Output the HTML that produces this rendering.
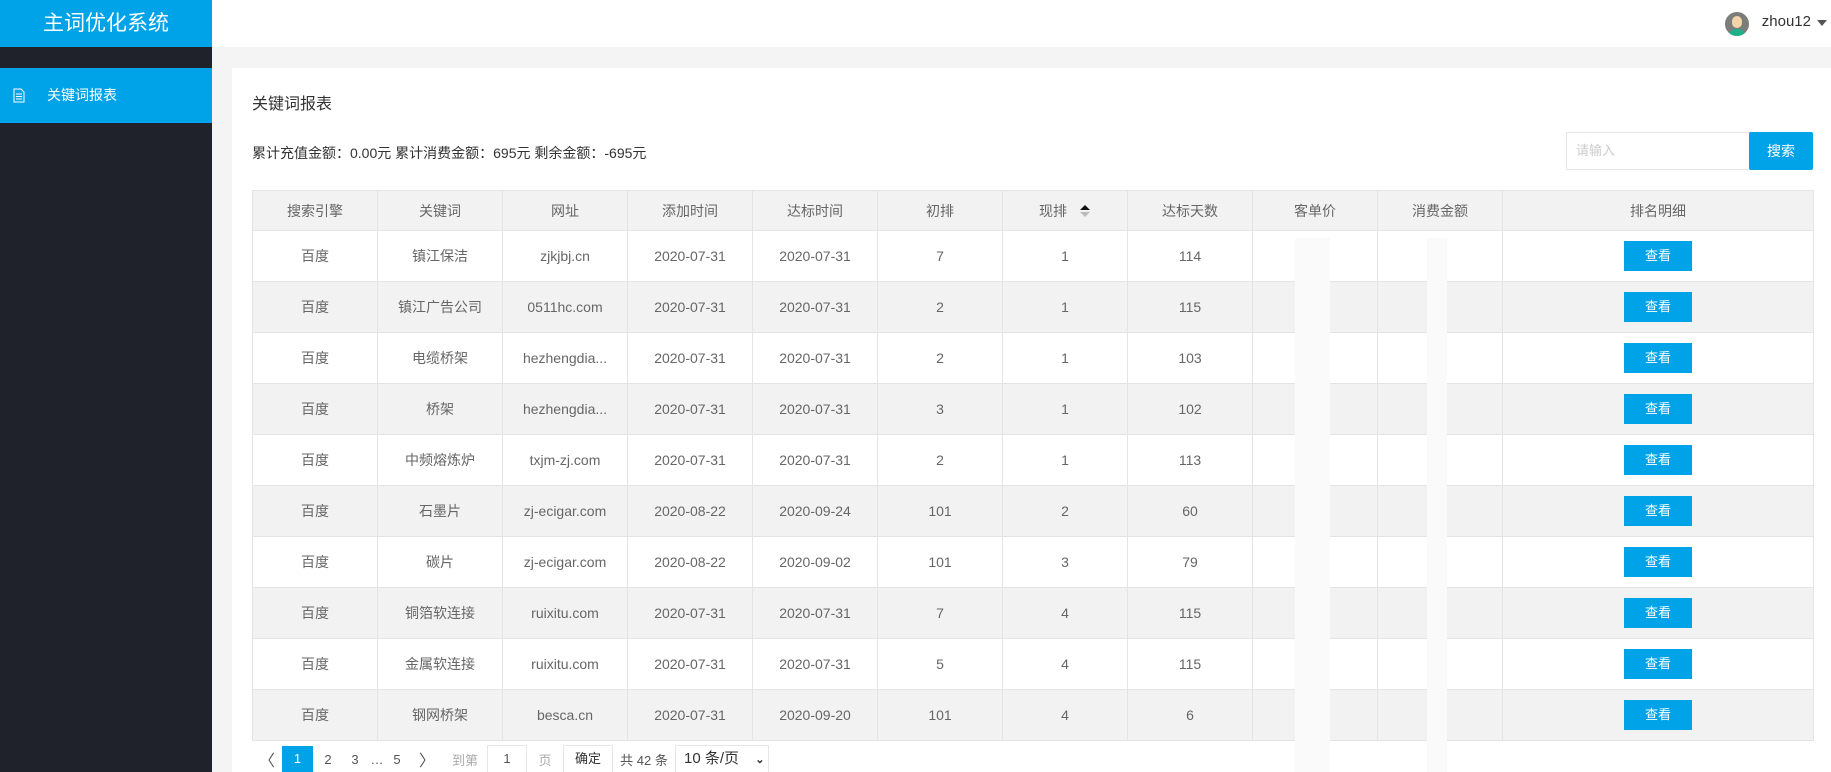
<!DOCTYPE html>
<html style="overflow:hidden;height:772px"><head><meta charset="utf-8"><style>
*{margin:0;padding:0;box-sizing:border-box}
body{width:1831px;height:772px;overflow:hidden;background:#f4f4f4;font-family:"Liberation Sans","Noto Sans CJK SC",sans-serif;color:#555;position:relative}
.logo{position:absolute;left:0;top:0;width:212px;height:47px;background:#01a3e8;color:#fff;font-size:21px;line-height:47px;text-align:center}
.top{position:absolute;left:212px;top:0;right:0;height:47px;background:#fff}
.side{position:absolute;left:0;top:47px;width:212px;bottom:0;background:#1f222a}
.menu{position:absolute;left:0;top:21px;width:212px;height:55px;background:#01a3e8;color:#fff;font-size:14px;line-height:55px;padding-left:47px}
.card{position:absolute;left:232px;top:68px;right:0;bottom:0;background:#fff;overflow:hidden}
table{position:absolute;left:20px;top:122px;border-collapse:collapse;font-size:14px;color:#666}
td,th{border:1px solid #e4e4e4;text-align:center;font-weight:normal;height:51px}
th{height:40px;background:#f2f2f2}
tr:nth-child(odd) td{background:#f2f2f2}
.btn{display:inline-block;width:68px;height:30px;line-height:30px;background:#01a3e8;color:#fff;font-size:13px}
.pg{position:absolute;left:20px;top:678px;font-size:13px;color:#555;height:26px;display:flex;align-items:center}
.pg span{display:inline-block;text-align:center}
</style></head><body>
<div class="logo">主词优化系统</div>
<div class="top">
<div style="position:absolute;right:82px;top:12px;width:24px;height:24px;border-radius:50%;background:#7b7d7a;overflow:hidden"><div style="position:absolute;left:7px;top:4px;width:10px;height:12px;border-radius:5px;background:#f3d3a8"></div><div style="position:absolute;left:3px;top:17px;width:18px;height:10px;border-radius:8px 8px 0 0;background:#1fb08a"></div></div>
<div style="position:absolute;right:20px;top:13px;font-size:15px;color:#333">zhou12</div>
<div style="position:absolute;right:4px;top:20px;border:5px solid transparent;border-top:6px solid #555"></div>
</div>
<div class="side"><div class="menu"><svg style="position:absolute;left:13px;top:20px" width="12" height="15"><path d="M1 1h7l3 3v10H1z" fill="none" stroke="#fff"/><path d="M3 6h6M3 8.5h6M3 11h6" stroke="#fff"/></svg>关键词报表</div></div>
<div class="card">
<div style="position:absolute;left:20px;top:22px;font-size:16px;color:#333">关键词报表</div>
<div style="position:absolute;left:20px;top:75px;font-size:14px;color:#333">累计充值金额：0.00元 累计消费金额：695元 剩余金额：-695元</div>
<div style="position:absolute;left:1334px;top:64px;width:184px;height:38px;border:1px solid #e6e6e6;font-size:13px;color:#ccc;line-height:36px;padding-left:9px">请输入</div>
<div style="position:absolute;left:1517px;top:64px;width:64px;height:38px;background:#01a3e8;color:#fff;font-size:14px;line-height:38px;text-align:center;border-radius:2px">搜索</div>
<table>
<tr><th style="width:125px">搜索引擎</th><th style="width:125px">关键词</th><th style="width:125px">网址</th><th style="width:125px">添加时间</th><th style="width:125px">达标时间</th><th style="width:125px">初排</th><th style="width:125px">现排 <svg width="12" height="14" style="vertical-align:-2px;margin-left:8px"><path d="M1 6L6 1L11 6z" fill="#111"/><path d="M1 8L6 13L11 8z" fill="#bbb"/></svg></th><th style="width:125px">达标天数</th><th style="width:125px">客单价</th><th style="width:125px">消费金额</th><th style="width:311px">排名明细</th></tr>
<tr><td>百度</td><td>镇江保洁</td><td>zjkjbj.cn</td><td>2020-07-31</td><td>2020-07-31</td><td>7</td><td>1</td><td>114</td><td></td><td></td><td><span class="btn">查看</span></td></tr>
<tr><td>百度</td><td>镇江广告公司</td><td>0511hc.com</td><td>2020-07-31</td><td>2020-07-31</td><td>2</td><td>1</td><td>115</td><td></td><td></td><td><span class="btn">查看</span></td></tr>
<tr><td>百度</td><td>电缆桥架</td><td>hezhengdia...</td><td>2020-07-31</td><td>2020-07-31</td><td>2</td><td>1</td><td>103</td><td></td><td></td><td><span class="btn">查看</span></td></tr>
<tr><td>百度</td><td>桥架</td><td>hezhengdia...</td><td>2020-07-31</td><td>2020-07-31</td><td>3</td><td>1</td><td>102</td><td></td><td></td><td><span class="btn">查看</span></td></tr>
<tr><td>百度</td><td>中频熔炼炉</td><td>txjm-zj.com</td><td>2020-07-31</td><td>2020-07-31</td><td>2</td><td>1</td><td>113</td><td></td><td></td><td><span class="btn">查看</span></td></tr>
<tr><td>百度</td><td>石墨片</td><td>zj-ecigar.com</td><td>2020-08-22</td><td>2020-09-24</td><td>101</td><td>2</td><td>60</td><td></td><td></td><td><span class="btn">查看</span></td></tr>
<tr><td>百度</td><td>碳片</td><td>zj-ecigar.com</td><td>2020-08-22</td><td>2020-09-02</td><td>101</td><td>3</td><td>79</td><td></td><td></td><td><span class="btn">查看</span></td></tr>
<tr><td>百度</td><td>铜箔软连接</td><td>ruixitu.com</td><td>2020-07-31</td><td>2020-07-31</td><td>7</td><td>4</td><td>115</td><td></td><td></td><td><span class="btn">查看</span></td></tr>
<tr><td>百度</td><td>金属软连接</td><td>ruixitu.com</td><td>2020-07-31</td><td>2020-07-31</td><td>5</td><td>4</td><td>115</td><td></td><td></td><td><span class="btn">查看</span></td></tr>
<tr><td>百度</td><td>钢网桥架</td><td>besca.cn</td><td>2020-07-31</td><td>2020-09-20</td><td>101</td><td>4</td><td>6</td><td></td><td></td><td><span class="btn">查看</span></td></tr>
</table>
<div style="position:absolute;left:1063px;top:170px;width:35px;height:534px;background:#fafafa"></div>
<div style="position:absolute;left:1195px;top:170px;width:20px;height:534px;background:#fafafa"></div>
<div class="pg">
<span style="width:30px;font-size:16px">〈</span>
<span style="width:31px;height:26px;line-height:26px;background:#01a3e8;color:#fff">1</span>
<span style="width:30px">2</span><span style="width:24px">3</span><span style="width:20px">…</span><span style="width:20px">5</span>
<span style="width:40px;font-size:16px">〉</span>
<span style="color:#aaa;width:36px">到第</span>
<span style="width:40px;height:28px;line-height:26px;border:1px solid #e6e6e6;margin-left:4px">1</span>
<span style="color:#aaa;width:36px">页</span>
<span style="width:50px;height:28px;line-height:26px;border:1px solid #e6e6e6;color:#333">确定</span>
<span style="width:62px">共 42 条</span>
<span style="width:94px;height:28px;line-height:26px;border:1px solid #e6e6e6;text-align:left;padding-left:8px;font-size:15px;color:#333">10 条/页 <b style="font-size:11px;margin-left:12px">⌄</b></span>
</div>
</div>
</body></html>
